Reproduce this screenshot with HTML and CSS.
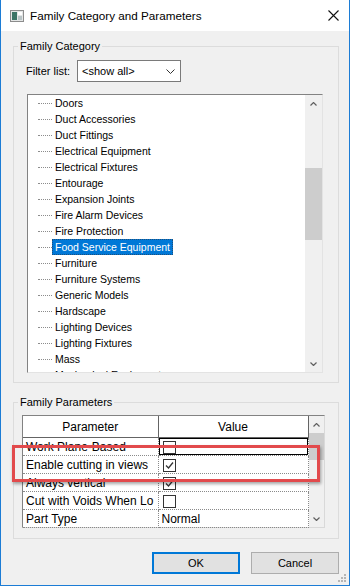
FILE: index.html
```html
<!DOCTYPE html>
<html>
<head>
  <title>Family Category and Parameters</title>
  <link rel="stylesheet" href="styles.css">
</head>
<body>
<div class="dialog">
  <div class="titlebar">
    <svg class="app-icon" width="14" height="12" viewBox="0 0 14 12">
      <rect x="0.5" y="0.5" width="13" height="11" fill="#e4e6e6" stroke="#8c8c8c"/>
      <rect x="2" y="2" width="5" height="8" fill="#3b7466"/>
      <rect x="8" y="2" width="4" height="3" fill="#ffffff"/>
      <rect x="8" y="6" width="4" height="4" fill="#b9c4c6"/>
    </svg>
    <span class="title">Family Category and Parameters</span>
    <svg class="close" width="11" height="11" viewBox="0 0 11 11">
      <path d="M0.5 0.5 L10.5 10.5 M10.5 0.5 L0.5 10.5" stroke="#111" stroke-width="1.1" fill="none"/>
    </svg>
  </div>

  <div class="content">
    <fieldset class="group category">
      <legend>Family Category</legend>
      <div class="filter-row">
        <label>Filter list:</label>
        <div class="combo">
          <span>&lt;show all&gt;</span>
          <svg width="9" height="5" viewBox="0 0 9 5"><path d="M0.5 0.5 L4.5 4.5 L8.5 0.5" stroke="#333" fill="none"/></svg>
        </div>
      </div>
      <div class="listbox">
        <ul class="tree">
          <li><span class="dots"></span><span class="txt">Doors</span></li>
          <li><span class="dots"></span><span class="txt">Duct Accessories</span></li>
          <li><span class="dots"></span><span class="txt">Duct Fittings</span></li>
          <li><span class="dots"></span><span class="txt">Electrical Equipment</span></li>
          <li><span class="dots"></span><span class="txt">Electrical Fixtures</span></li>
          <li><span class="dots"></span><span class="txt">Entourage</span></li>
          <li><span class="dots"></span><span class="txt">Expansion Joints</span></li>
          <li><span class="dots"></span><span class="txt">Fire Alarm Devices</span></li>
          <li><span class="dots"></span><span class="txt">Fire Protection</span></li>
          <li class="sel"><span class="dots"></span><span class="txt">Food Service Equipment</span></li>
          <li><span class="dots"></span><span class="txt">Furniture</span></li>
          <li><span class="dots"></span><span class="txt">Furniture Systems</span></li>
          <li><span class="dots"></span><span class="txt">Generic Models</span></li>
          <li><span class="dots"></span><span class="txt">Hardscape</span></li>
          <li><span class="dots"></span><span class="txt">Lighting Devices</span></li>
          <li><span class="dots"></span><span class="txt">Lighting Fixtures</span></li>
          <li><span class="dots"></span><span class="txt">Mass</span></li>
          <li><span class="dots"></span><span class="txt">Mechanical Equipment</span></li>
        </ul>
        <div class="vscroll">
          <div class="sbtn"><svg width="7" height="4" viewBox="0 0 7 4"><path d="M0.5 3.5 L3.5 0.5 L6.5 3.5" stroke="#606060" stroke-width="1.2" fill="none"/></svg></div>
          <div class="track"><div class="thumb list-thumb"></div></div>
          <div class="sbtn"><svg width="7" height="4" viewBox="0 0 7 4"><path d="M0.5 0.5 L3.5 3.5 L6.5 0.5" stroke="#606060" stroke-width="1.2" fill="none"/></svg></div>
        </div>
      </div>
    </fieldset>

    <fieldset class="group params">
      <legend>Family Parameters</legend>
      <div class="grid">
        <table class="param-table">
          <colgroup><col class="c1"><col class="c2"></colgroup>
          <tr><th>Parameter</th><th>Value</th></tr>
          <tr><td>Work Plane-Based</td><td class="focus"><span class="cb"></span></td></tr>
          <tr><td>Enable cutting in views</td><td><span class="cb"><svg width="11" height="11" viewBox="0 0 11 11"><path d="M2 5.5 L4.5 8 L9 2.5" stroke="#333" stroke-width="1.3" fill="none"/></svg></span></td></tr>
          <tr><td>Always vertical</td><td><span class="cb"><svg width="11" height="11" viewBox="0 0 11 11"><path d="M2 5.5 L4.5 8 L9 2.5" stroke="#333" stroke-width="1.3" fill="none"/></svg></span></td></tr>
          <tr><td>Cut with Voids When Lo</td><td><span class="cb"></span></td></tr>
          <tr><td>Part Type</td><td>Normal</td></tr>
        </table>
        <div class="vscroll">
          <div class="sbtn"><svg width="7" height="4" viewBox="0 0 7 4"><path d="M0.5 3.5 L3.5 0.5 L6.5 3.5" stroke="#606060" stroke-width="1.2" fill="none"/></svg></div>
          <div class="track"><div class="thumb grid-thumb"></div></div>
          <div class="sbtn"><svg width="7" height="4" viewBox="0 0 7 4"><path d="M0.5 0.5 L3.5 3.5 L6.5 0.5" stroke="#606060" stroke-width="1.2" fill="none"/></svg></div>
        </div>
      </div>
    </fieldset>

    <div class="buttons">
      <button class="btn default">OK</button>
      <button class="btn">Cancel</button>
    </div>
  </div>

  <!-- red annotation drawn over the grid -->
  <div class="highlight"></div>
  <svg class="grip" width="9" height="9" viewBox="0 0 9 9">
    <rect x="6" y="0" width="2" height="2" fill="#b5b5b5"/>
    <rect x="3" y="3" width="2" height="2" fill="#b5b5b5"/>
    <rect x="6" y="3" width="2" height="2" fill="#b5b5b5"/>
    <rect x="0" y="6" width="2" height="2" fill="#b5b5b5"/>
    <rect x="3" y="6" width="2" height="2" fill="#b5b5b5"/>
    <rect x="6" y="6" width="2" height="2" fill="#b5b5b5"/>
  </svg>
</div>
</body>
</html>
```

FILE: styles.css
```css
body {
    margin: 0;
    background: #fff;
    font-family: "Liberation Sans", Arial, sans-serif;
    color: #000;
}

.dialog {
    position: relative;
    width: 350px;
    height: 586px;
    box-sizing: border-box;
    border: 1px solid #1c7cd5;
    border-top: none;
    background: #f0f0f0;
    display: flex;
    flex-direction: column;
}

/* title bar */
.titlebar {
    height: 31px;
    background: #fff;
    display: flex;
    align-items: center;
    padding: 0 10px 0 9px;
}
.app-icon {
    margin-right: 6px;
}
.title {
    flex: 1;
    font-size: 11.7px;
}

.content {
    flex: 1;
    display: flex;
    flex-direction: column;
    padding: 0 10px 0 12px;
}

/* group boxes */
.group {
    margin: 13px 0 0 0;
    border: 1px solid #dcdcdc;
    min-width: 0;
}
.group legend {
    padding: 0 2px;
    font-size: 11px;
    line-height: 13px;
}
.category {
    margin-top: 9px;
    padding: 7px 10px 9px 4px;
}
.params {
    padding: 6px 10px 10px 4px;
}

.filter-row {
    display: flex;
    align-items: center;
    gap: 7px;
    height: 22px;
    margin-left: 8px;
    font-size: 11px;
}
.combo {
    width: 104px;
    height: 22px;
    box-sizing: border-box;
    border: 1px solid #7a7a7a;
    background: #fff;
    display: flex;
    align-items: center;
    justify-content: space-between;
    padding: 0 5px 0 4px;
}

/* tree list */
.listbox {
    margin: 12px 0 0 9px;
    width: 296px;
    height: 279px;
    box-sizing: border-box;
    border: 1px solid;
    border-color: #828282 #e3e3e3 #e3e3e3 #828282;
    background: #fff;
    display: flex;
}
.tree {
    flex: 1;
    margin: 0;
    padding: 0;
    list-style: none;
    overflow: hidden;
    font-size: 10.5px;
}
.tree li {
    height: 16px;
    display: flex;
    align-items: center;
    white-space: nowrap;
}
.dots {
    width: 14px;
    margin-left: 10px;
    border-top: 1px dotted #8c8c8c;
}
.txt {
    padding: 0 3px;
    line-height: 16px;
    height: 16px;
}
.sel .txt {
    background: #0078d7;
    color: #fff;
    outline: 1px dotted #1d4f7c;
    outline-offset: -1px;
}

/* scroll bars */
.vscroll {
    width: 17px;
    display: flex;
    flex-direction: column;
    background: #f0f0f0;
}
.sbtn {
    height: 17px;
    display: flex;
    align-items: center;
    justify-content: center;
}
.track {
    flex: 1;
}
.thumb {
    background: #cdcdcd;
}
.list-thumb {
    margin-top: 56px;
    height: 72px;
}
.grid-thumb {
    height: 27px;
}

/* parameter grid */
.grid {
    margin-left: 4px;
    width: 303px;
    height: 113px;
    box-sizing: border-box;
    border: 1px solid;
    border-color: #828282 #d9d9d9 #d9d9d9 #828282;
    background: #fff;
    display: flex;
}
.param-table {
    width: 285px;
    border-collapse: collapse;
    table-layout: fixed;
    font-size: 12px;
    align-self: flex-start;
}
.c1 { width: 135px; }
.c2 { width: 150px; }
.param-table th {
    height: 21px;
    padding: 0;
    font-weight: normal;
    border-right: 1px solid #646464;
    border-bottom: 1px solid #646464;
}
.param-table td {
    height: 17px;
    padding: 0 3px;
    white-space: nowrap;
    overflow: hidden;
    text-overflow: clip;
    border-right: 1px dotted #8a8a8a;
    border-bottom: 1px dotted #8a8a8a;
}
.param-table td.focus {
    box-shadow: inset 0 0 0 1px #000;
}
.cb {
    display: inline-block;
    width: 13px;
    height: 13px;
    box-sizing: border-box;
    border: 1px solid #333;
    background: #fff;
    vertical-align: middle;
    margin-left: 1px;
}
.cb svg {
    display: block;
}

/* buttons */
.buttons {
    display: flex;
    justify-content: flex-end;
    gap: 11px;
    margin-top: 13px;
}
.btn {
    width: 88px;
    height: 22px;
    font-family: "Liberation Sans", Arial, sans-serif;
    font-size: 11px;
    background: #e1e1e1;
    border: 1px solid #adadad;
    padding: 0;
}
.btn.default {
    border-color: #0078d7;
    box-shadow: inset 0 0 0 1px #0078d7;
}

.highlight {
    position: absolute;
    left: 11px;
    top: 445px;
    width: 308px;
    height: 37px;
    box-sizing: border-box;
    border: 3px solid #e24a4c;
    box-shadow: 1px 2px 3px rgba(0, 0, 0, 0.35);
}
.grip {
    position: absolute;
    right: 2px;
    bottom: 2px;
}
```
